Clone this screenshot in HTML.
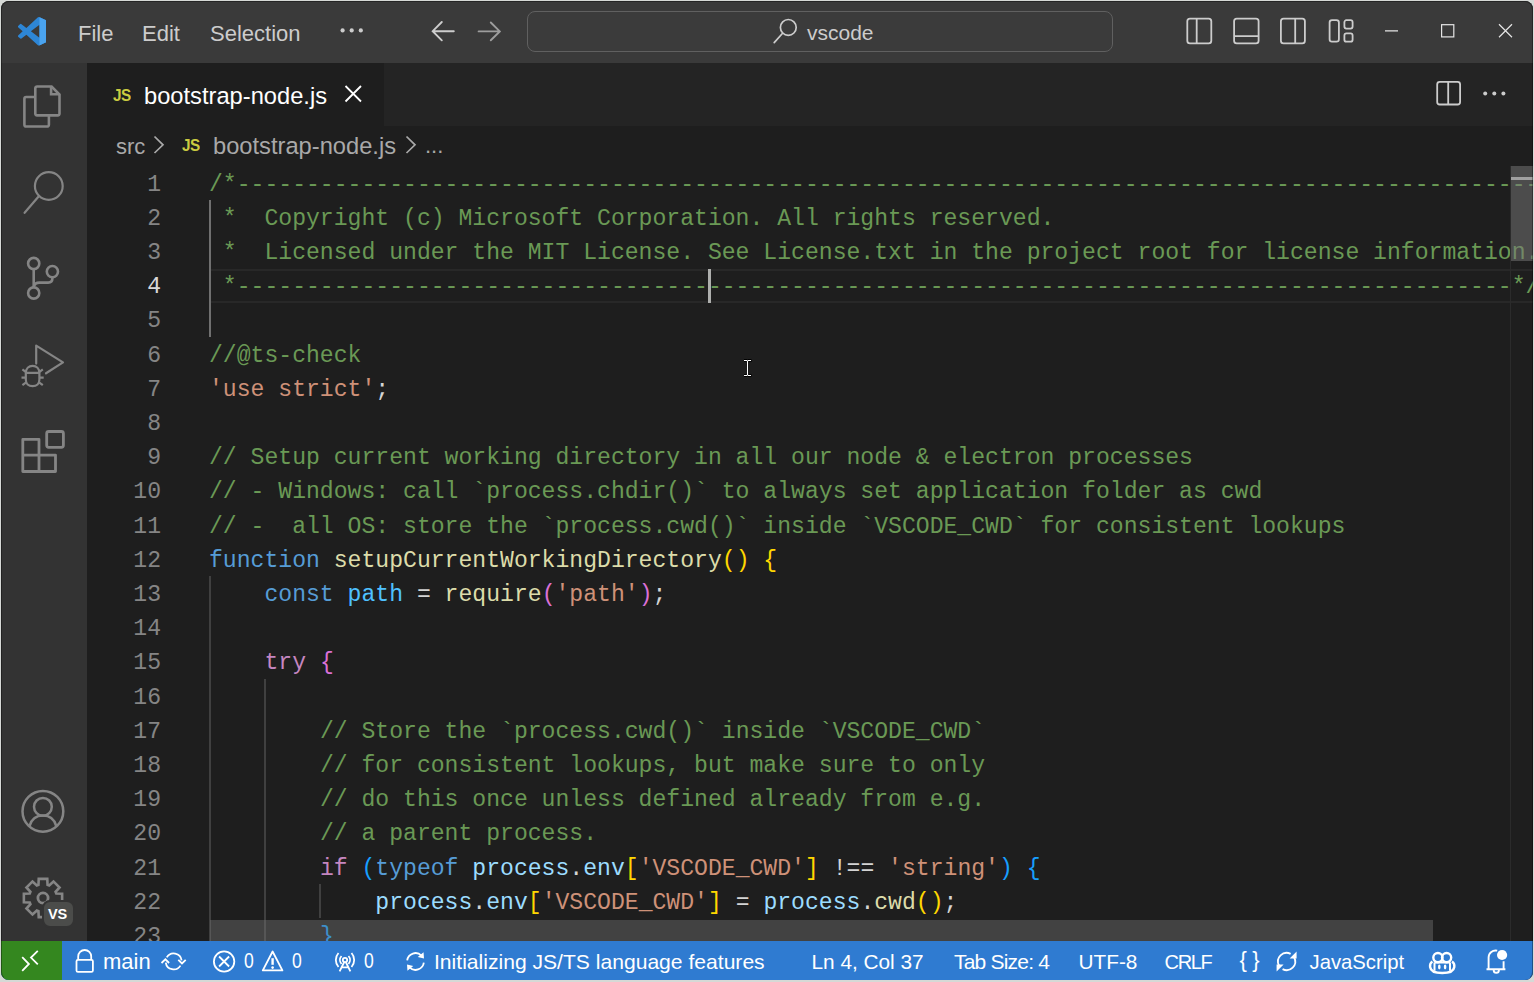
<!DOCTYPE html>
<html><head><meta charset="utf-8">
<style>
*{margin:0;padding:0;box-sizing:border-box}
html,body{width:1534px;height:982px;overflow:hidden;background:#d6d9d6}
body{position:relative;font-family:"Liberation Sans",sans-serif}
.win{position:absolute;left:0;top:0;width:1534px;height:982px;clip-path:inset(1px 1px 2px 1px round 8px);background:#1e1e1e}
.frame{position:absolute;left:1px;top:1px;width:1532px;height:979px;border-radius:8px;border:1px solid rgba(0,0,0,0.35);border-bottom-color:transparent;pointer-events:none}
.abs{position:absolute}
#title{left:0;top:0;width:1534px;height:63px;background:#3a3a3a}
#act{left:0;top:63px;width:87px;height:878px;background:#333333}
#tabs{left:87px;top:63px;width:1447px;height:63px;background:#242424}
#tab{left:87px;top:63px;width:297px;height:63px;background:#1e1e1e}
#crumbs{left:87px;top:126px;width:1447px;height:40px;background:#1e1e1e}
#status{left:0;top:941px;width:1534px;height:41px;background:#2f7bd1}
#remote{left:0;top:941px;width:62px;height:41px;background:#34871f}
.menu{color:#cccccc;font-size:22px;top:20.5px}
.code{font-family:"Liberation Mono",monospace;font-size:23.1px;white-space:pre;line-height:34.2px}
.ln{position:absolute;left:0;width:161px;text-align:right;color:#858585}
.cl{position:absolute;left:209px}
.v2{color:#4fc1ff}.c{color:#6a9955}.k{color:#569cd6}.f{color:#dcdcaa}.v{color:#9cdcfe}.s{color:#ce9178}.p{color:#d4d4d4}.ctl{color:#c586c0}
.b1{color:#ffd700}.b2{color:#da70d6}.b3{color:#179fff}
.crumb{color:#a9a9a9;font-size:22px}
.sb{color:#ffffff;font-size:21px;line-height:24px;top:949.5px;position:absolute;white-space:pre}
</style></head><body>
<div class="win">
  <div id="title" class="abs"></div>
  <svg class="abs" style="left:17.5px;top:17.3px" width="28.6" height="28.6" viewBox="0 0 100 100"><path fill="#2d86d6" d="M96.46 10.8L75.86.87a6.23 6.23 0 0 0-7.1 1.2L29.35 38.04 12.19 25.01a4.16 4.16 0 0 0-5.31.24l-5.5 5a4.16 4.16 0 0 0 0 6.16L16.26 50 1.38 63.58a4.16 4.16 0 0 0 0 6.16l5.5 5a4.16 4.16 0 0 0 5.31.24l17.16-13.03 39.41 35.96a6.23 6.23 0 0 0 7.1 1.2l20.6-9.92A6.24 6.24 0 0 0 100 83.6V16.4a6.24 6.24 0 0 0-3.54-5.6zM75.02 72.7L45.11 50l29.91-22.7v45.4z"/><path fill="#4aa3ef" d="M75 0.5 L96.46 10.8 A6.24 6.24 0 0 1 100 16.4 V83.6 A6.24 6.24 0 0 1 96.46 89.2 L75 99.5 Z"/></svg>
  <div class="abs menu" style="left:78px">File</div>
  <div class="abs menu" style="left:142px">Edit</div>
  <div class="abs menu" style="left:210px">Selection</div>
  <svg class="abs" style="left:330px;top:20px" width="40" height="20" viewBox="330 20 40 20"><circle cx="342.6" cy="30.4" r="2.1" fill="#cccccc"/><circle cx="351.7" cy="30.4" r="2.1" fill="#cccccc"/><circle cx="360.8" cy="30.4" r="2.1" fill="#cccccc"/></svg>
  <svg class="abs" style="left:420px;top:12px" width="90" height="40" viewBox="420 12 90 40"><path d="M453.8 31.2H433M441.8 22L432.7 31.2L441.8 40.3" stroke="#cccccc" stroke-width="1.9" fill="none" stroke-linecap="round"/></svg>
  <svg class="abs" style="left:420px;top:12px" width="90" height="40" viewBox="420 12 90 40"><path d="M478.6 31.4H499.4M490.8 22.5L499.8 31.4L490.8 40.3" stroke="#9d9d9d" stroke-width="1.9" fill="none" stroke-linecap="round"/></svg>
  <div class="abs" style="left:527px;top:11px;width:586px;height:41px;border:1.5px solid #606060;border-radius:8px;background:#3b3b3b"></div>
  <svg class="abs" style="left:770px;top:16px" width="30" height="30" viewBox="0 0 30 30"><circle cx="18.3" cy="11.4" r="7.9" stroke="#cccccc" stroke-width="1.7" fill="none"/><path d="M12.6 17.2L4.2 26.6" stroke="#cccccc" stroke-width="1.7" stroke-linecap="round"/></svg>
  <div class="abs" style="left:807px;top:21px;color:#cccccc;font-size:21px">vscode</div>

  
  <svg class="abs" style="left:1180px;top:12px" width="180" height="38" viewBox="0 0 180 38" fill="none" stroke="#cccccc" stroke-width="1.8">
    <rect x="7.3" y="6.6" width="24" height="24.7" rx="2.6"/><path d="M16.7 6.6V31.3"/>
    <rect x="54.1" y="6.6" width="24.5" height="24.7" rx="2.6"/><path d="M54.1 24.2H78.6"/>
    <rect x="100.9" y="6.6" width="24" height="24.7" rx="2.6"/><path d="M115.2 6.6V31.3"/>
    <rect x="149.6" y="8.2" width="9.3" height="21.5" rx="2.4"/><rect x="164.4" y="8.2" width="8.2" height="8.4" rx="2"/><rect x="164.4" y="21.4" width="8.2" height="8.3" rx="2"/>
  </svg>
  <svg class="abs" style="left:1380px;top:18px" width="140" height="26" viewBox="0 0 140 26" fill="none" stroke="#e6e6e6" stroke-width="1.2">
    <path d="M5 12.8H18"/>
    <rect x="61.6" y="6.7" width="12.2" height="12.2"/>
    <path d="M119 6.3L132 19.2M132 6.3L119 19.2"/>
  </svg>
  <div id="act" class="abs"></div>
  
  <svg class="abs" style="left:0;top:63px" width="87" height="878" viewBox="0 63 87 878" fill="none" stroke="#858585" stroke-width="2.2">
    <path d="M35.3 97H26.2a1.8 1.8 0 0 0-1.8 1.8V124.7a1.8 1.8 0 0 0 1.8 1.8H47.1a1.8 1.8 0 0 0 1.8-1.8V115.4" stroke-width="2.6"/>
    <path d="M37.1 86.5H51.6L59.5 94.5V113.6a1.8 1.8 0 0 1-1.8 1.8H37.1a1.8 1.8 0 0 1-1.8-1.8V88.3a1.8 1.8 0 0 1 1.8-1.8z" stroke-width="2.6"/>
    <path d="M51.1 86.5V94.2H59.5" stroke-width="2.6"/>
    <circle cx="48.8" cy="186" r="13.9"/>
    <path d="M38.8 196.2L24.6 212.8" stroke-linecap="round"/>
    <g stroke-width="2.6"><circle cx="33.7" cy="263.5" r="5.6"/>
    <circle cx="33.7" cy="293" r="5.6"/>
    <circle cx="52.4" cy="271.6" r="5.6"/>
    <path d="M33.7 269.1V287.4"/>
    <path d="M52.4 277.2V278.3Q52.4 282.6 48.2 282.6H39.5Q34.6 282.6 33.7 287"/></g>
    <path d="M36.2 363.6V345.6L63 362.4L46 373.3" stroke-linejoin="round" stroke-linecap="round"/>
    <path d="M25.8 373.2C25.8 368.5 28.8 365.9 32.6 365.9S39.4 368.5 39.4 373.2V379.5C39.4 383.6 36.6 386.2 32.6 386.2S25.8 383.6 25.8 379.5Z"/>
    <path d="M25.8 372.8H39.4M22.4 369.4L26.3 372.4M42.8 369.4L38.9 372.4M21.5 377.6H25.8M39.4 377.6H43.7M22.4 385.2L26.2 382.3M42.8 385.2L39 382.3"/>
    <g stroke-width="2.8" stroke-linejoin="round"><path d="M22.8 439.4H39V455.1H55.5V471.5H22.8zM22.8 455.1H39V471.5"/>
    <rect x="46.7" y="431.5" width="16.7" height="15.8" rx="2"/></g>
    <circle cx="42.9" cy="811.3" r="20.4" stroke-width="2.5"/>
    <circle cx="42.9" cy="806.8" r="8.9" stroke-width="2.5"/>
    <path d="M29.5 826.2C31.5 819 36.5 815.6 42.9 815.6S54.3 819 56.3 826.2" stroke-width="2.5"/>
    <path d="M38.46 884.76 L38.72 878.87 L47.28 878.87 L47.54 884.76 L49.16 885.43 L53.50 881.45 L59.55 887.50 L55.57 891.84 L56.24 893.46 L62.13 893.72 L62.13 902.28 L56.24 902.54 L55.57 904.16 L59.55 908.50 L53.50 914.55 L49.16 910.57 L47.54 911.24 L47.28 917.13 L38.72 917.13 L38.46 911.24 L36.84 910.57 L32.50 914.55 L26.45 908.50 L30.43 904.16 L29.76 902.54 L23.87 902.28 L23.87 893.72 L29.76 893.46 L30.43 891.84 L26.45 887.50 L32.50 881.45 L36.84 885.43Z" stroke-linejoin="miter" stroke-width="2.6"/>
    <circle cx="43" cy="898" r="5.1" stroke-width="2.8"/>
  </svg>
  <div class="abs" style="left:41.5px;top:899.5px;width:33px;height:28px;border-radius:8px;background:#4b4c4a;border:2.2px solid #333333"></div>
  <div class="abs" style="left:48px;top:905.5px;color:#ffffff;font-size:14.5px;font-weight:bold;letter-spacing:-0.2px">VS</div>
  <div id="tabs" class="abs"></div>
  <div id="tab" class="abs"></div>
  <div id="crumbs" class="abs"></div>
  
  <div class="abs" style="left:113px;top:85.5px;color:#cbcb41;font-size:17px;font-weight:bold;letter-spacing:-0.6px;transform:scaleX(0.9);transform-origin:0 0">JS</div>
  <div class="abs" style="left:144px;top:83px;color:#ffffff;font-size:23.7px">bootstrap-node.js</div>
  <svg class="abs" style="left:340px;top:80px" width="28" height="28" viewBox="0 0 28 28"><path d="M5.5 6L21 21.5M21 6L5.5 21.5" stroke="#ffffff" stroke-width="1.8"/></svg>
  <svg class="abs" style="left:1430px;top:76px" width="90" height="34" viewBox="0 0 90 34" fill="none" stroke="#cccccc" stroke-width="1.8">
    <rect x="7.2" y="5.9" width="22.9" height="22.6" rx="2.5"/><path d="M18.2 5.9V28.5"/>
    <circle cx="55.2" cy="17.6" r="2" fill="#cccccc" stroke="none"/><circle cx="64.3" cy="17.6" r="2" fill="#cccccc" stroke="none"/><circle cx="73.4" cy="17.6" r="2" fill="#cccccc" stroke="none"/>
  </svg>
  <div class="abs crumb" style="left:116px;top:134px">src</div>
  <svg class="abs" style="left:150px;top:133px" width="18" height="24" viewBox="0 0 18 24"><path d="M4.5 3.5L13 11.8L4.5 20" stroke="#a9a9a9" stroke-width="1.7" fill="none"/></svg>
  <div class="abs" style="left:182px;top:136px;color:#cbcb41;font-size:17px;font-weight:bold;letter-spacing:-0.6px;transform:scaleX(0.9);transform-origin:0 0">JS</div>
  <div class="abs crumb" style="left:213px;top:133px;font-size:23.7px">bootstrap-node.js</div>
  <svg class="abs" style="left:402px;top:133px" width="18" height="24" viewBox="0 0 18 24"><path d="M4.5 3.5L13 11.8L4.5 20" stroke="#a9a9a9" stroke-width="1.7" fill="none"/></svg>
  <div class="abs crumb" style="left:425px;top:133px">...</div>
  
  <div class="abs" style="left:211px;top:269px;width:1323px;height:34px;border-top:2px solid #282828;border-bottom:2px solid #282828"></div>
  <div class="abs" style="left:209px;top:200px;width:2px;height:137px;background:#707070"></div>
  <div class="abs" style="left:209px;top:576px;width:2px;height:365px;background:#404040"></div>
  <div class="abs" style="left:264px;top:679px;width:2px;height:262px;background:#404040"></div>
  <div class="abs" style="left:319px;top:884px;width:2px;height:34px;background:#404040"></div>
  <div class="abs code" style="left:0;top:167.5px;width:1534px;height:773.5px;overflow:hidden">
    <div class="ln" style="top:0.0px">1</div><div class="cl" style="top:0.0px"><span class="c">/*------------------------------------------------------------------------------------------------------------------------</span></div>
    <div class="ln" style="top:34.2px">2</div><div class="cl" style="top:34.2px"><span class="c"> *  Copyright (c) Microsoft Corporation. All rights reserved.</span></div>
    <div class="ln" style="top:68.4px">3</div><div class="cl" style="top:68.4px"><span class="c"> *  Licensed under the MIT License. See License.txt in the project root for license information.</span></div>
    <div class="ln" style="top:102.6px;color:#d8d8d8">4</div><div class="cl" style="top:102.6px"><span class="c"> *--------------------------------------------------------------------------------------------*/</span></div>
    <div class="ln" style="top:136.8px">5</div><div class="cl" style="top:136.8px"></div>
    <div class="ln" style="top:171.0px">6</div><div class="cl" style="top:171.0px"><span class="c">//@ts-check</span></div>
    <div class="ln" style="top:205.2px">7</div><div class="cl" style="top:205.2px"><span class="s">'use strict'</span><span class="p">;</span></div>
    <div class="ln" style="top:239.4px">8</div><div class="cl" style="top:239.4px"></div>
    <div class="ln" style="top:273.6px">9</div><div class="cl" style="top:273.6px"><span class="c">// Setup current working directory in all our node &amp; electron processes</span></div>
    <div class="ln" style="top:307.8px">10</div><div class="cl" style="top:307.8px"><span class="c">// - Windows: call `process.chdir()` to always set application folder as cwd</span></div>
    <div class="ln" style="top:342.0px">11</div><div class="cl" style="top:342.0px"><span class="c">// -  all OS: store the `process.cwd()` inside `VSCODE_CWD` for consistent lookups</span></div>
    <div class="ln" style="top:376.2px">12</div><div class="cl" style="top:376.2px"><span class="k">function</span> <span class="f">setupCurrentWorkingDirectory</span><span class="b1">()</span> <span class="b1">{</span></div>
    <div class="ln" style="top:410.4px">13</div><div class="cl" style="top:410.4px">    <span class="k">const</span> <span class="v2">path</span> <span class="p">=</span> <span class="f">require</span><span class="b2">(</span><span class="s">'path'</span><span class="b2">)</span><span class="p">;</span></div>
    <div class="ln" style="top:444.6px">14</div><div class="cl" style="top:444.6px"></div>
    <div class="ln" style="top:478.8px">15</div><div class="cl" style="top:478.8px">    <span class="ctl">try</span> <span class="b2">{</span></div>
    <div class="ln" style="top:513.0px">16</div><div class="cl" style="top:513.0px"></div>
    <div class="ln" style="top:547.2px">17</div><div class="cl" style="top:547.2px">        <span class="c">// Store the `process.cwd()` inside `VSCODE_CWD`</span></div>
    <div class="ln" style="top:581.4px">18</div><div class="cl" style="top:581.4px">        <span class="c">// for consistent lookups, but make sure to only</span></div>
    <div class="ln" style="top:615.6px">19</div><div class="cl" style="top:615.6px">        <span class="c">// do this once unless defined already from e.g.</span></div>
    <div class="ln" style="top:649.8px">20</div><div class="cl" style="top:649.8px">        <span class="c">// a parent process.</span></div>
    <div class="ln" style="top:684.0px">21</div><div class="cl" style="top:684.0px">        <span class="ctl">if</span> <span class="b3">(</span><span class="k">typeof</span> <span class="v">process</span><span class="p">.</span><span class="v">env</span><span class="b1">[</span><span class="s">'VSCODE_CWD'</span><span class="b1">]</span> <span class="p">!==</span> <span class="s">'string'</span><span class="b3">)</span> <span class="b3">{</span></div>
    <div class="ln" style="top:718.2px">22</div><div class="cl" style="top:718.2px">            <span class="v">process</span><span class="p">.</span><span class="v">env</span><span class="b1">[</span><span class="s">'VSCODE_CWD'</span><span class="b1">]</span> <span class="p">=</span> <span class="v">process</span><span class="p">.</span><span class="f">cwd</span><span class="b1">()</span><span class="p">;</span></div>
    <div class="ln" style="top:752.4px">23</div><div class="cl" style="top:752.4px">        <span class="b3">}</span></div>
    <div class="ln" style="top:786.6px">24</div><div class="cl" style="top:786.6px"></div>
  </div>

  <div class="abs" style="left:708px;top:269px;width:3px;height:34px;background:#aeafad"></div>
  <div class="abs" style="left:1510px;top:166px;width:1px;height:775px;background:#2b2b2b"></div>
  <div class="abs" style="left:1511px;top:166px;width:23px;height:95px;background:rgba(121,121,121,0.5)"></div>
  <div class="abs" style="left:1511px;top:177px;width:23px;height:3px;background:#a0a0a0"></div>
  <div class="abs" style="left:210px;top:920px;width:1223px;height:21px;background:rgba(121,121,121,0.4)"></div>
  <svg class="abs" style="left:740px;top:357px" width="16" height="22" viewBox="740 357 16 22"><path d="M744 360.5h3.5M748 360.5h3.5M744 375.5h3.5M748 375.5h3.5M747.5 361v14" stroke="#000" stroke-width="3"/><path d="M744 360.5h3M748 360.5h3M744 375.5h3M748 375.5h3M747.5 360.5v15" stroke="#fff" stroke-width="1.2"/></svg>
  <div id="status" class="abs"></div>
  <div id="remote" class="abs"></div>
  <svg class="abs" style="left:0;top:941px" width="1534" height="41" viewBox="0 941 1534 41" fill="none" stroke="#ffffff" stroke-width="1.8">
    <path d="M37.8 950.9L31 957.6L37.8 964.3M22.2 957.2L28.9 964L22.2 970.9"/>
    <path d="M78.2 959.8V956.5a6.5 6.5 0 0 1 13 0V959.8"/>
    <rect x="76.5" y="959.8" width="16.4" height="12.1" rx="1.5"/>
    <path d="M166.77 957.40A8.0 8.0 0 0 1 181.62 960.29M178.30 959.80L182.00 963.50L185.70 959.80M180.48 965.64A8.0 8.0 0 0 1 165.78 962.51M161.50 963.00L165.40 959.30L169.10 963.00"/>
    <circle cx="224.1" cy="961.5" r="10.2"/>
    <path d="M219.1 956.5l10 10M229.1 956.5l-10 10"/>
    <path d="M272.6 951.5L262.8 970.4H282.4Z" stroke-linejoin="round"/>
    <path d="M272.6 958.2v6.6" stroke-width="2.4"/><circle cx="272.6" cy="967.6" r="1.3" fill="#fff" stroke="none"/>
    <path d="M338.5 953a10.5 10.5 0 0 0 0 14M351.5 953a10.5 10.5 0 0 1 0 14M341.5 956a6 6 0 0 0 0 8M348.5 956a6 6 0 0 1 0 8"/>
    <circle cx="345" cy="960" r="2.2"/>
    <path d="M344 962.5L339.6 971.3M346 962.5L350.4 971.3M341.5 967.3h7"/>
    <path d="M407.18 960.33A8.4 8.4 0 0 1 421.44 955.56M423.82 962.67A8.4 8.4 0 0 1 409.56 967.44"/>
    <path d="M423.99 958.55L423.56 952.13L417.74 957.01Z M407.01 964.45L407.44 970.87L413.26 965.99Z" fill="#fff" stroke="none"/>
    <path d="M1290.64 953.91A8.6 8.6 0 0 0 1279.01 965.54M1294.19 957.46A8.6 8.6 0 0 1 1282.56 969.09"/>
    <path d="M1289.6 958.4H1296.6V951.4Z M1276.6 964.4H1283.6L1276.6 971.4Z" fill="#fff" stroke="none"/>
    <path d="M1488.6 968.8V957.5a7 7 0 0 1 8.6-6.8M1503.6 961.3V968.8M1486.5 969.2H1505.4M1493.7 970.2a2.6 2.6 0 0 0 5.2 0" stroke-width="1.9"/>
  </svg>
  <svg class="abs" style="left:1425px;top:948px" width="34" height="30" viewBox="1425 948 34 30" fill="none" stroke="#ffffff" stroke-width="2.4">
    <circle cx="1437.9" cy="957.6" r="4.6"/><circle cx="1446.6" cy="957.6" r="4.6"/>
    <path d="M1432.4 961.5C1430.2 962.8 1429.8 964.5 1430.1 967C1430.6 970.8 1435 973 1442.2 973S1453.8 970.8 1454.3 967C1454.6 964.5 1454.2 962.8 1452 961.5"/>
    <path d="M1434.5 962.5V970.8M1450 962.5V970.8M1434.5 962.5H1450" stroke-width="2"/>
    <ellipse cx="1439.3" cy="967" rx="1.3" ry="2.4" fill="#fff" stroke="none"/><ellipse cx="1445.1" cy="967" rx="1.3" ry="2.4" fill="#fff" stroke="none"/>
  </svg>
  <svg class="abs" style="left:1494px;top:947px" width="16" height="16"><circle cx="8.1" cy="8" r="5.1" fill="#ffffff"/></svg>
  <div class="sb" style="left:103px;font-size:22px">main</div>
  <div class="sb" style="left:243.5px;top:948.5px;font-size:22.5px;transform:scaleX(0.78);transform-origin:0 0">0</div>
  <div class="sb" style="left:291.5px;top:948.5px;font-size:22.5px;transform:scaleX(0.78);transform-origin:0 0">0</div>
  <div class="sb" style="left:363.5px;top:948.5px;font-size:22.5px;transform:scaleX(0.78);transform-origin:0 0">0</div>
  <div class="sb" style="left:434px;font-size:21.1px">Initializing JS/TS language features</div>
  <div class="sb" style="left:811.5px;font-size:20.8px">Ln 4, Col 37</div>
  <div class="sb" style="left:954px;font-size:21px;letter-spacing:-0.8px">Tab Size: 4</div>
  <div class="sb" style="left:1078.5px;font-size:20.8px">UTF-8</div>
  <div class="sb" style="left:1164.5px;font-size:20px;letter-spacing:-1.3px">CRLF</div>
  <div class="sb" style="left:1239.5px;top:948px;font-size:22px;letter-spacing:5.5px">{}</div>
  <div class="sb" style="left:1309.5px;font-size:20.3px">JavaScript</div>

</div>
<div class="frame"></div>
</body></html>
